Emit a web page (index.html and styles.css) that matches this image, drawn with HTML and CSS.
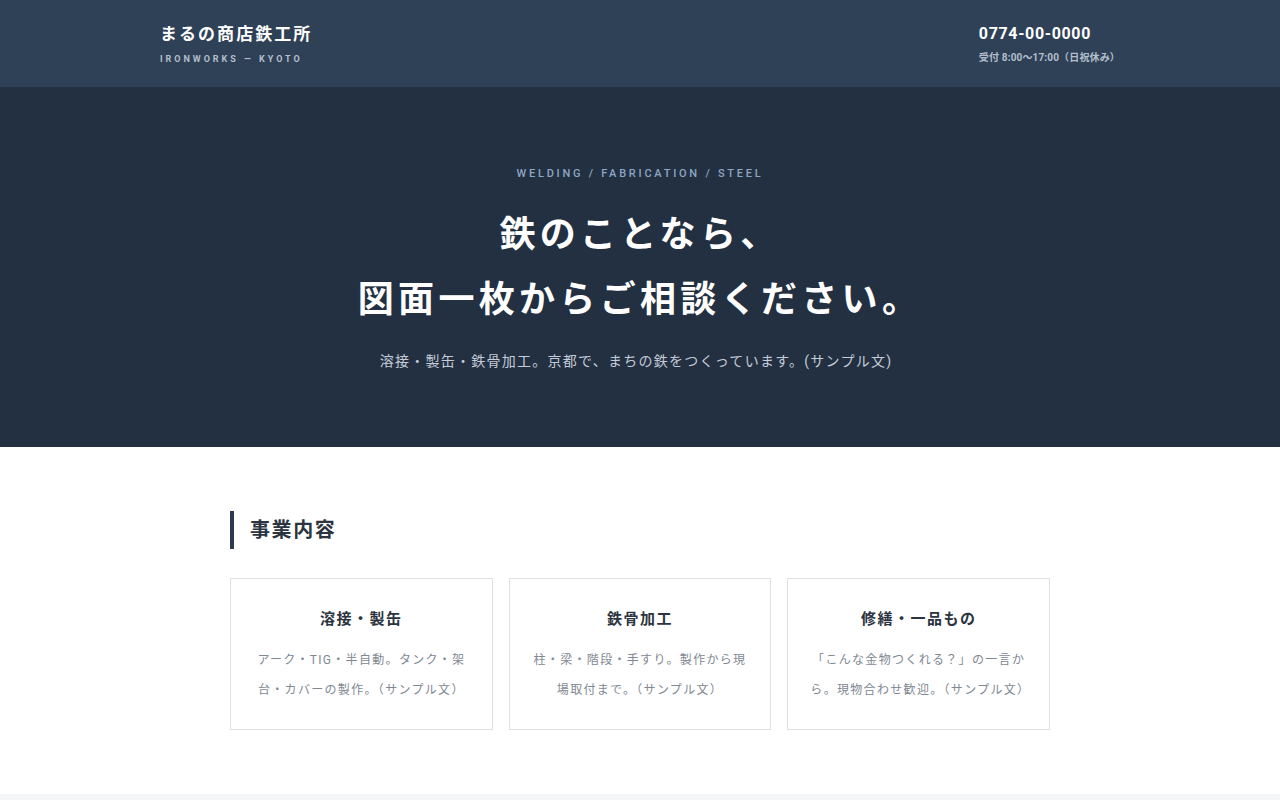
FILE: index.html
```html
<!DOCTYPE html>
<html lang="ja">
<head>
<meta charset="utf-8">
<title>まるの商店鉄工所</title>
<link rel="stylesheet" href="styles.css">
</head>
<body>
<header class="site-header">
  <div class="header-inner">
    <div class="brand">
      <div class="brand-name">まるの商店鉄工所</div>
      <div class="brand-sub">IRONWORKS — KYOTO</div>
    </div>
    <div class="contact">
      <div class="contact-tel">0774-00-0000</div>
      <div class="contact-hours">受付 8:00〜17:00（日祝休み）</div>
    </div>
  </div>
</header>
<section class="hero">
  <p class="hero-eyebrow">WELDING / FABRICATION / STEEL</p>
  <h1 class="hero-title">鉄のことなら、<br>図面一枚からご相談ください。</h1>
  <p class="hero-lead">溶接・製缶・鉄骨加工。京都で、まちの鉄をつくっています。(サンプル文)</p>
</section>
<main class="services">
  <div class="services-inner">
    <h2 class="section-title">事業内容</h2>
    <div class="cards">
      <div class="card">
        <h3 class="card-title">溶接・製缶</h3>
        <p class="card-text">アーク・TIG・半自動。タンク・架台・カバーの製作。（サンプル文）</p>
      </div>
      <div class="card">
        <h3 class="card-title">鉄骨加工</h3>
        <p class="card-text">柱・梁・階段・手すり。製作から現場取付まで。（サンプル文）</p>
      </div>
      <div class="card">
        <h3 class="card-title">修繕・一品もの</h3>
        <p class="card-text">「こんな金物つくれる？」の一言から。現物合わせ歓迎。（サンプル文）</p>
      </div>
    </div>
  </div>
</main>
<footer class="site-footer"></footer>
</body>
</html>
```

FILE: styles.css
```css
* { box-sizing: border-box; }
html, body { margin: 0; padding: 0; }
body {
  font-family: "Roboto", "Noto Sans CJK JP", sans-serif;
  background: #ffffff;
  color: #2b3440;
}
.site-header {
  background: #2f4157;
  padding: 22px 0 21px;
}
.header-inner {
  width: 960px;
  margin: 0 auto;
  display: flex;
  justify-content: space-between;
  align-items: flex-start;
}
.brand-name {
  color: #ffffff;
  font-size: 17px;
  font-weight: 700;
  letter-spacing: 0.12em;
  line-height: 24px;
}
.brand-sub {
  color: #b4bfcc;
  font-size: 9px;
  font-weight: 700;
  letter-spacing: 0.33em;
  line-height: 14px;
  margin-top: 6px;
}
.contact { padding-right: 0; }
.contact-tel {
  color: #ffffff;
  font-size: 16px;
  font-weight: 700;
  letter-spacing: 0.04em;
  line-height: 24px;
}
.contact-hours {
  color: #b4bfcc;
  font-size: 10px;
  font-weight: 700;
  letter-spacing: 0.015em;
  line-height: 14px;
  margin-top: 5px;
}
.hero {
  background: #233042;
  text-align: center;
  padding: 80px 0 74px;
}
.hero-eyebrow {
  margin: 0;
  color: #8ea6c4;
  font-size: 11px;
  font-weight: 500;
  letter-spacing: 0.25em;
  line-height: 14px;
}
.hero-title {
  margin: 18px 0 0;
  color: #ffffff;
  font-family: "Noto Sans CJK JP", sans-serif;
  font-size: 36px;
  font-weight: 700;
  letter-spacing: 0.12em;
  line-height: 65px;
}
.hero-lead {
  margin: 20px 0 0;
  padding-right: 8px;
  color: #c3ccd8;
  font-size: 14px;
  letter-spacing: 0.09em;
  line-height: 24px;
}
.services { padding: 64px 0; }
.services-inner {
  width: 820px;
  margin: 0 auto;
}
.section-title {
  margin: 0;
  border-left: 4px solid #2b3a4f;
  padding-left: 16px;
  font-size: 20px;
  font-weight: 700;
  letter-spacing: 0.08em;
  line-height: 38px;
  color: #2b3440;
}
.cards {
  margin-top: 29px;
  display: grid;
  grid-template-columns: repeat(3, 1fr);
  gap: 16px;
}
.card {
  border: 1px solid #dde0e5;
  padding: 28px 22px 24px;
  text-align: center;
}
.card-title {
  margin: 0;
  font-size: 15px;
  font-weight: 700;
  letter-spacing: 0.1em;
  line-height: 24px;
  color: #2b3440;
}
.card-text {
  margin: 14px 0 0;
  font-size: 12px;
  color: #808892;
  letter-spacing: 0.11em;
  line-height: 30px;
}
.site-footer {
  background: #f4f5f7;
  height: 40px;
}
```
